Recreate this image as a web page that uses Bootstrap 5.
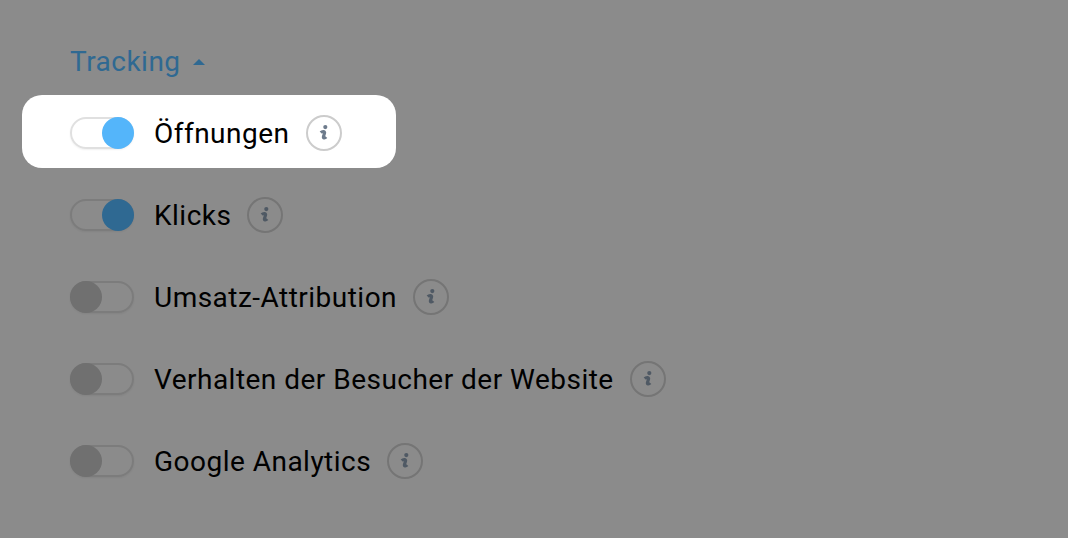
<!DOCTYPE html>
<html lang="de">
<head>
<meta charset="utf-8">
<meta name="viewport" content="width=device-width, initial-scale=1">
<title>Tracking</title>
<link href="https://cdn.jsdelivr.net/npm/bootstrap@5.3.0/dist/css/bootstrap.min.css" rel="stylesheet">
<style>
body{background:#8b8b8b;color:#000;font-family:Roboto,sans-serif;font-size:28px;line-height:36px;letter-spacing:.48px;--edge:#7c7c7c;--on:#2f6992;--glyph:#4f5964;overflow:hidden}
.tracking{padding:44px 0 0 22px}
.section-title{height:36px;margin:0 0 15px 48px;color:#2f6992}
.section-title svg{margin:0 0 1px 11.5px}
.option{height:73px;margin-bottom:9px;padding-left:48px;width:fit-content}
.option.active{width:373.5px;background:#fff;border-radius:20px;--edge:#e0e0e0;--on:#54b5fa;--glyph:#6d7b8c;--ring:#ccc}
.option-name{padding-top:5px}
.switch{appearance:none;width:64px;height:32px;margin:3px 20px 0 0;border:2px solid var(--edge);border-radius:16px;display:flex;flex:none;box-shadow:0 1px 2px rgba(0,0,0,.06)}
.switch::before{content:"";width:32px;height:32px;margin:-2px;border-radius:50%;background:#707070}
.switch:checked::before{margin-left:30px;background:var(--on)}
.info{width:36px;height:36px;margin:3px 0 0 16.1px;color:var(--glyph)}
.info circle:first-child{stroke:var(--ring,#757575)}
</style>
</head>
<body>
<main class="tracking">
<div class="section-title d-flex align-items-center">Tracking<svg width="14" height="8" viewBox="0 0 14 8"><path d="M1 7 7 1l6 6z" fill="currentColor"/></svg></div>
<div id="options"></div>
</main>
<script src="https://cdn.jsdelivr.net/npm/bootstrap@5.3.0/dist/js/bootstrap.bundle.min.js"></script>
<script>
const options=[["Öffnungen",true],["Klicks",true],["Umsatz-Attribution",false],["Verhalten der Besucher der Website",false],["Google Analytics",false]];
document.getElementById("options").innerHTML=options.map(([name,on],i)=>`
<label class="option d-flex align-items-center ${i===0?"active":""}">
<input class="switch" type="checkbox" role="switch" ${on?"checked":""}><span class="option-name text-nowrap">${name}</span>
<svg class="info flex-shrink-0" viewBox="0 0 36 36" fill="none"><circle cx="18" cy="18" r="17" stroke-width="2"/><circle cx="19.3" cy="12.1" r="2.1" fill="currentColor"/><path d="M14.8 17.6c1.4-1.5 4.4-1.5 3.8.4l-1.2 3.7c-.4 1.5 1.4 1.8 2.8.3" stroke="currentColor" stroke-width="3.1"/></svg>
</label>`).join("");
</script>
</body>
</html>
